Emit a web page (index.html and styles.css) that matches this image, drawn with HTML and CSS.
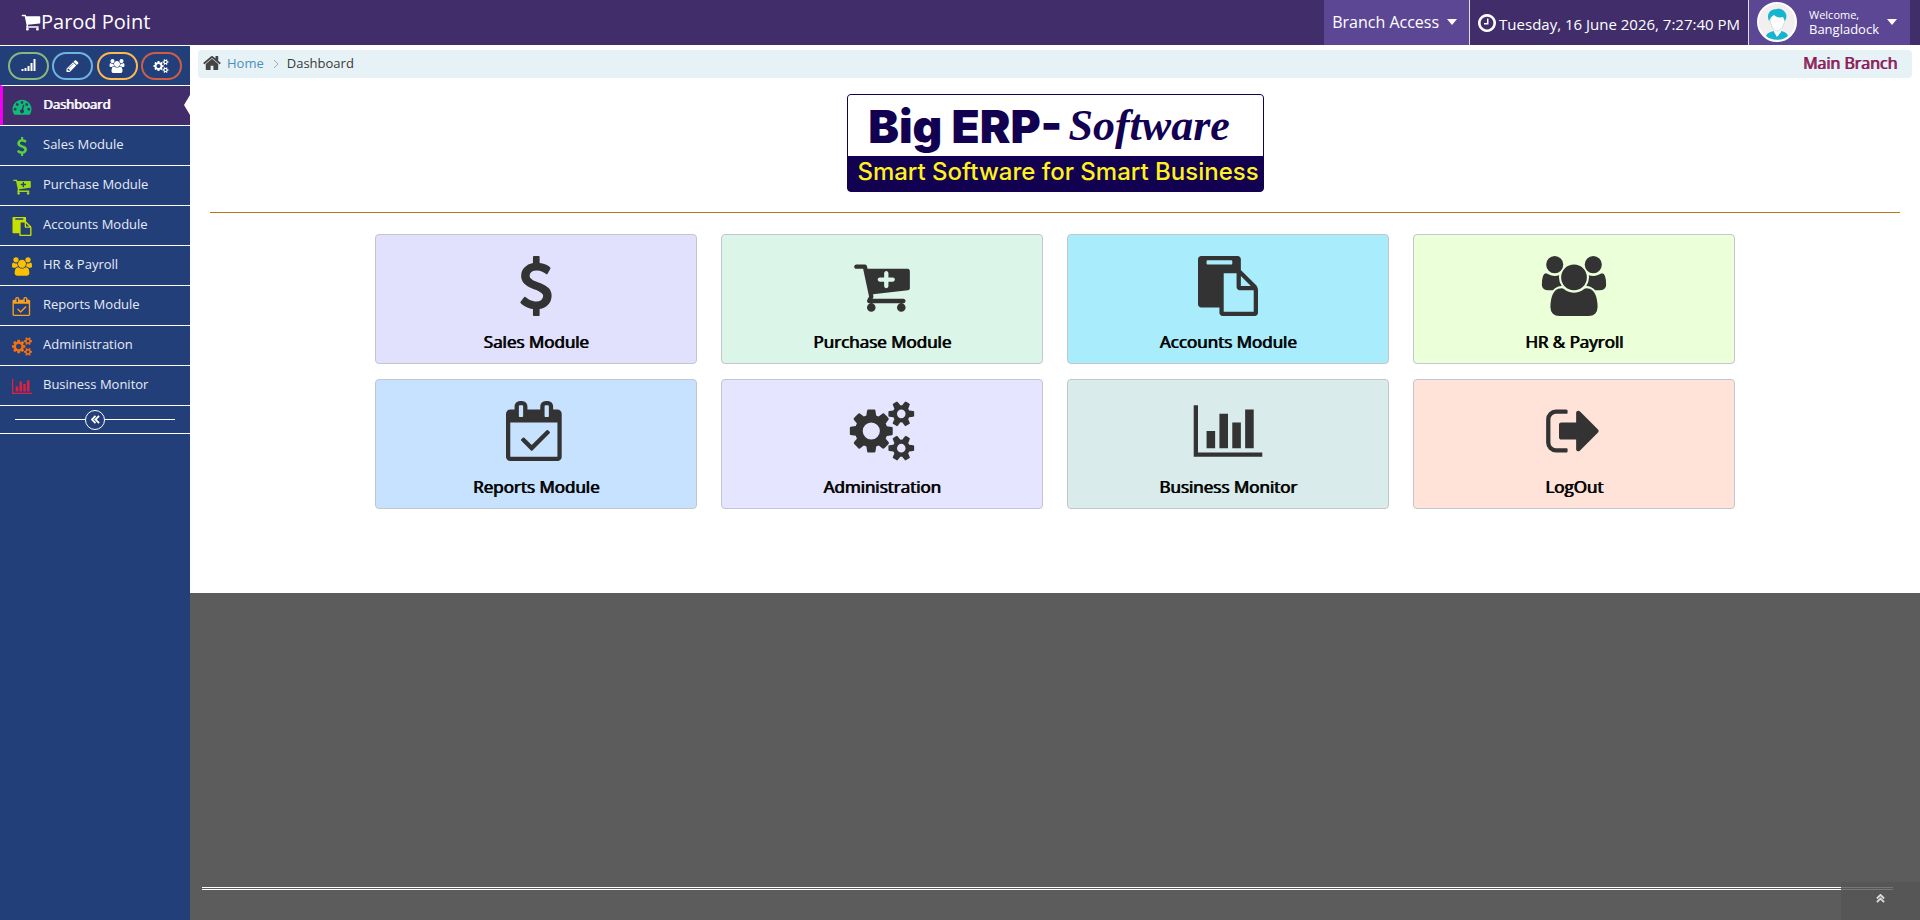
FILE: index.html
```html
<!DOCTYPE html>
<html lang="en">
<head>
    <meta charset="UTF-8">
    <meta name="viewport" content="width=device-width, initial-scale=1.0">
    <title>Dashboard</title>
    <link rel="stylesheet" href="styles.css">
</head>
<body>

    <!-- Icon set -->
    <svg class="icon-set" aria-hidden="true">
        <symbol id="icon-cart" viewBox="64 0 1664 1792"><path d="M704 1536q0 52-38 90t-90 38-90-38-38-90 38-90 90-38 90 38 38 90zm896 0q0 52-38 90t-90 38-90-38-38-90 38-90 90-38 90 38 38 90zm128-1088v512q0 24-16.5 42.5t-40.5 21.5l-1044 122q13 60 13 70 0 16-24 64h920q26 0 45 19t19 45-19 45-45 19h-1024q-26 0-45-19t-19-45q0-11 8-31.5t16-36 21.5-40 15.5-29.5l-177-823h-204q-26 0-45-19t-19-45 19-45 45-19h256q16 0 28.5 6.5t19.5 15.5 13 24.5 8 26 5.5 29.5 4.5 26h1201q26 0 45 19t19 45z"/></symbol>
        <symbol id="icon-cart-plus" viewBox="64 0 1664 1792"><path d="M1280 704q0-26-19-45t-45-19h-128v-128q0-26-19-45t-45-19-45 19-19 45v128h-128q-26 0-45 19t-19 45 19 45 45 19h128v128q0 26 19 45t45 19 45-19 19-45v-128h128q26 0 45-19t19-45zm-576 832q0 53-37.5 90.5t-90.5 37.5-90.5-37.5-37.5-90.5 37.5-90.5 90.5-37.5 90.5 37.5 37.5 90.5zm896 0q0 53-37.5 90.5t-90.5 37.5-90.5-37.5-37.5-90.5 37.5-90.5 90.5-37.5 90.5 37.5 37.5 90.5zm128-1088v512q0 24-16 42.5t-41 21.5l-1044 122q1 7 4.5 21.5t6 26.5 2.5 22q0 16-24 64h920q26 0 45 19t19 45-19 45-45 19h-1024q-26 0-45-19t-19-45q0-14 11-39.5t29.5-59.5 20.5-38l-177-823h-204q-26 0-45-19t-19-45 19-45 45-19h256q16 0 28.5 6.5t20 15.5 13 24.5 7.5 26.5 5.5 29.5 4.5 25.5h1201q26 0 45 19t19 45z"/></symbol>
        <symbol id="icon-dollar" viewBox="384 0 1024 1792"><path d="M1362 1185q0 153-99.5 263.5t-258.5 136.5v175q0 14-9 23t-23 9h-135q-13 0-22.5-9.5t-9.5-22.5v-175q-66-9-127.5-31t-101.5-44.5-74-48-46.5-37.5-17.5-18q-17-21-2-41l103-135q7-10 23-12 15-2 24 9l2 2q113 99 243 125 37 8 74 8 81 0 142.5-43t61.5-122q0-28-15-53t-33.5-42-58.5-37.5-66-32-80-32.5q-39-16-61.5-25t-61.5-26.5-62.5-31-56.5-35.5-53.5-42.5-43.5-49-35.5-58-21-66.5-8.5-78q0-138 98-242t255-134v-180q0-13 9.5-22.5t22.5-9.5h135q14 0 23 9t9 23v176q57 6 110.5 23t87 33.5 63.5 37.5 39 29 15 14q17 18 5 38l-81 146q-8 15-23 16-14 3-27-7-3-3-14.5-12t-39-26.5-58.5-32-74.5-26-85.5-11.5q-95 0-155 43t-60 111q0 26 8.5 48t29.5 41.5 39.5 33 56 31 60.5 27 70 27.5q53 20 81 31.5t76 35 75.5 42.5 62 50 53 63.5 31.5 76.5 13 94z"/></symbol>
        <symbol id="icon-paste" viewBox="0 0 1792 1792"><path d="M768 1664h896v-640h-416q-40 0-68-28t-28-68v-416h-384v1152zm256-1440v-64q0-13-9.5-22.5t-22.5-9.5h-704q-13 0-22.5 9.5t-9.5 22.5v64q0 13 9.5 22.5t22.5 9.5h704q13 0 22.5-9.5t9.5-22.5zm256 672h299l-299-299v299zm512 128v672q0 40-28 68t-68 28h-960q-40 0-68-28t-28-68v-160h-544q-40 0-68-28t-28-68v-1344q0-40 28-68t68-28h1088q40 0 68 28t28 68v328q21 13 36 28l408 408q28 28 48 76t20 88z"/></symbol>
        <symbol id="icon-users" viewBox="-64 0 1920 1792"><path d="M529 896q-162 5-265 128h-134q-82 0-138-40.5t-56-118.5q0-353 124-353 6 0 43.5 21t97.5 42.5 119 21.5q67 0 133-23-5 37-5 66 0 139 81 256zm1071 637q0 120-73 189.5t-194 69.5h-874q-121 0-194-69.5t-73-189.5q0-53 3.5-103.5t14-109 26.5-108.5 43-97.5 62-81 85.5-53.5 111.5-20q10 0 43 21.5t73 48 107 48 135 21.5 135-21.5 107-48 73-48 43-21.5q61 0 111.5 20t85.5 53.5 62 81 43 97.5 26.5 108.5 14 109 3.5 103.5zm-1024-1277q0 106-75 181t-181 75-181-75-75-181 75-181 181-75 181 75 75 181zm704 384q0 159-112.5 271.5t-271.5 112.5-271.5-112.5-112.5-271.5 112.5-271.5 271.5-112.5 271.5 112.5 112.5 271.5zm576 225q0 78-56 118.5t-138 40.5h-134q-103-123-265-128 81-117 81-256 0-29-5-66 66 23 133 23 59 0 119-21.5t97.5-42.5 43.5-21q124 0 124 353zm-128-609q0 106-75 181t-181 75-181-75-75-181 75-181 181-75 181 75 75 181z"/></symbol>
        <symbol id="icon-calendar" viewBox="0 0 1792 1792"><path d="M1303 964l-512 512q-10 9-23 9t-23-9l-288-288q-9-10-9-23t9-22l46-46q9-9 22-9t23 9l220 220 444-444q10-9 23-9t22 9l46 46q9 9 9 22t-9 23zm-1175 700h1408v-1024h-1408v1024zm384-1216v-288q0-14-9-23t-23-9h-64q-14 0-23 9t-9 23v288q0 14 9 23t23 9h64q14 0 23-9t9-23zm768 0v-288q0-14-9-23t-23-9h-64q-14 0-23 9t-9 23v288q0 14 9 23t23 9h64q14 0 23-9t9-23zm384-64v1280q0 52-38 90t-90 38h-1408q-52 0-90-38t-38-90v-1280q0-52 38-90t90-38h128v-96q0-66 47-113t113-47h64q66 0 113 47t47 113v96h384v-96q0-66 47-113t113-47h64q66 0 113 47t47 113v96h128q52 0 90 38t38 90z"/></symbol>
        <symbol id="icon-cogs" viewBox="-64 0 1920 1792"><path d="M832 896q0-106-75-181t-181-75-181 75-75 181 75 181 181 75 181-75 75-181zm768 512q0-52-38-90t-90-38-90 38-38 90q0 53 37.5 90.5t90.5 37.5 90.5-37.5 37.5-90.5zm0-1024q0-52-38-90t-90-38-90 38-38 90q0 53 37.5 90.5t90.5 37.5 90.5-37.5 37.5-90.5zm-384 421v185q0 10-7 19.5t-16 10.5l-155 24q-11 35-32 76 34 48 90 115 7 11 7 20 0 12-7 19-23 30-82.5 89.5t-78.5 59.5q-11 0-21-7l-115-90q-37 19-77 31-11 108-23 155-7 24-30 24h-186q-11 0-20-7.5t-10-17.5l-23-153q-34-10-75-31l-118 89q-7 7-20 7-11 0-21-8-144-133-144-160 0-9 7-19 10-14 41-53t47-61q-23-44-35-82l-152-24q-10-1-17-9.5t-7-19.5v-185q0-10 7-19.5t16-10.5l155-24q11-35 32-76-34-48-90-115-7-11-7-20 0-12 7-20 22-30 82-89t79-59q11 0 21 7l115 90q34-18 77-32 11-108 23-154 7-24 30-24h186q11 0 20 7.5t10 17.5l23 153q34 10 75 31l118-89q8-7 20-7 11 0 21 8 144 133 144 160 0 8-7 19-12 16-42 54t-45 60q23 48 34 82l152 23q10 2 17 10.5t7 19.5zm640 533v140q0 16-149 31-12 27-30 52 51 113 51 138 0 4-4 7-122 71-124 71-8 0-46-47t-52-68q-20 2-30 2t-30-2q-14 21-52 68t-46 47q-2 0-124-71-4-3-4-7 0-25 51-138-18-25-30-52-149-15-149-31v-140q0-16 149-31 13-29 30-52-51-113-51-138 0-4 4-7 4-2 35-20t59-34 30-16q8 0 46 46.5t52 67.5q20-2 30-2t30 2q51-71 92-112l6-2q4 0 124 70 4 3 4 7 0 25-51 138 17 23 30 52 149 15 149 31zm0-1024v140q0 16-149 31-12 27-30 52 51 113 51 138 0 4-4 7-122 71-124 71-8 0-46-47t-52-68q-20 2-30 2t-30-2q-14 21-52 68t-46 47q-2 0-124-71-4-3-4-7 0-25 51-138-18-25-30-52-149-15-149-31v-140q0-16 149-31 13-29 30-52-51-113-51-138 0-4 4-7 4-2 35-20t59-34 30-16q8 0 46 46.5t52 67.5q20-2 30-2t30 2q51-71 92-112l6-2q4 0 124 70 4 3 4 7 0 25-51 138 17 23 30 52 149 15 149 31z"/></symbol>
        <symbol id="icon-chart" viewBox="0 0 2048 1792"><path d="M640 896v512h-256v-512h256zm384-512v1024h-256v-1024h256zm1024 1152v128h-2048v-1536h128v1408h1920zm-640-896v768h-256v-768h256zm384-384v1152h-256v-1152h256z"/></symbol>
        <symbol id="icon-signout" viewBox="64 0 1664 1792"><path d="M704 1440q0 4 1 20t.5 26.5-3 23.5-10 19.5-20.5 6.5h-320q-119 0-203.5-84.5t-84.5-203.5v-704q0-119 84.5-203.5t203.5-84.5h320q13 0 22.5 9.5t9.5 22.5q0 4 1 20t.5 26.5-3 23.5-10 19.5-20.5 6.5h-320q-66 0-113 47t-47 113v704q0 66 47 113t113 47h312l11.5 1 11.5 3 8 5.5 7 9 2 13.5zm928-544q0 26-19 45l-544 544q-19 19-45 19t-45-19-19-45v-288h-448q-26 0-45-19t-19-45v-384q0-26 19-45t45-19h448v-288q0-26 19-45t45-19 45 19l544 544q19 19 19 45z"/></symbol>
        <symbol id="icon-gauge" viewBox="0 0 1792 1792"><path d="M384 1152q0-53-37.5-90.5t-90.5-37.5-90.5 37.5-37.5 90.5 37.5 90.5 90.5 37.5 90.5-37.5 37.5-90.5zm192-448q0-53-37.5-90.5t-90.5-37.5-90.5 37.5-37.5 90.5 37.5 90.5 90.5 37.5 90.5-37.5 37.5-90.5zm428 481l101-382q6-26-7.5-48.5t-38.5-29.5-48 6.5-30 39.5l-101 382q-60 5-107 43.5t-63 98.5q-20 77 20 146t117 89 146-20 89-117q16-60-6-117t-72-91zm660-33q0-53-37.5-90.5t-90.5-37.5-90.5 37.5-37.5 90.5 37.5 90.5 90.5 37.5 90.5-37.5 37.5-90.5zm-640-640q0-53-37.5-90.5t-90.5-37.5-90.5 37.5-37.5 90.5 37.5 90.5 90.5 37.5 90.5-37.5 37.5-90.5zm448 192q0-53-37.5-90.5t-90.5-37.5-90.5 37.5-37.5 90.5 37.5 90.5 90.5 37.5 90.5-37.5 37.5-90.5zm320 448q0 261-141 483-19 29-54 29h-1402q-35 0-54-29-141-221-141-483 0-182 71-348t191-286 286-191 348-71 348 71 286 191 191 286 71 348z"/></symbol>
        <symbol id="icon-signal" viewBox="0 0 1792 1792"><path d="M0 1280h256v256H0zM384 1152h256v384H384zM768 896h256v640H768zM1152 512h256v1024h-256zM1536 0h256v1536h-256z"/></symbol>
        <symbol id="icon-pencil" viewBox="64 0 1664 1792"><path d="M491 1536l91-91-235-235-91 91v107h128v128h107zm523-928q0-22-22-22-10 0-17 7l-542 542q-7 7-7 17 0 22 22 22 10 0 17-7l542-542q7-7 7-17zm-54-192l416 416-832 832h-416v-416zm683 96q0 53-37 90l-166 166-416-416 166-165q36-38 90-38 53 0 91 38l235 234q37 39 37 91z"/></symbol>
        <symbol id="icon-clock" viewBox="128 128 1536 1536"><path d="M1024 544v448q0 14-9 23t-23 9h-320q-14 0-23-9t-9-23v-64q0-14 9-23t23-9h224v-352q0-14 9-23t23-9h64q14 0 23 9t9 23zm416 352q0-148-73-273t-198-198-273-73-273 73-198 198-73 273 73 273 198 198 273 73 273-73 198-198 73-273zm224 0q0 209-103 385.5t-279.5 279.5-385.5 103-385.5-103-279.5-279.5-103-385.5 103-385.5 279.5-279.5 385.5-103 385.5 103 279.5 279.5 103 385.5z"/></symbol>
        <symbol id="icon-home" viewBox="64 192 1664 1408"><path d="M1472 992v480q0 26-19 45t-45 19h-384v-384h-256v384h-384q-26 0-45-19t-19-45v-480q0-1 .5-3t.5-3l575-474 575 474q1 2 1 6zm223-69l-62 74q-8 9-21 11h-3q-13 0-21-7l-692-577-692 577q-12 8-24 7-13-2-21-11l-62-74q-8-10-7-23.5t11-21.5l719-599q32-26 76-26t76 26l244 204v-195q0-14 9-23t23-9h192q14 0 23 9t9 23v408l219 182q10 8 11 21.5t-7 23.5z"/></symbol>
    </svg>

    <!-- Top bar -->
    <header class="navbar">
        <a href="#" class="brand"><svg class="brand-icon"><use href="#icon-cart"/></svg>Parod Point</a>
        <div class="nav-right">
            <button type="button" class="nav-item branch-access">Branch Access <span class="caret"></span></button>
            <div class="nav-item clock"><svg class="clock-icon"><use href="#icon-clock"/></svg>Tuesday, 16 June 2026, 7:27:40 PM</div>
            <button type="button" class="nav-item user-menu">
                <svg class="avatar" viewBox="0 0 40 40" aria-hidden="true">
                    <circle cx="20" cy="20" r="19" fill="#f1eff0" stroke="#fff" stroke-width="2"/>
                    <path d="M9 34c1-3 4-4 8-5l3 5 4-5c4 1 6 2 7 5-6 5-16 5-22 0z" fill="#15b5cf"/>
                    <path d="M17 26v4l3 5 4-5v-4z" fill="#fff"/>
                    <path d="M13 15c0 8 3 14 7 14s8-6 8-14l-3-4H15z" fill="#fff" stroke="#d5dde0" stroke-width="1"/>
                    <path d="M12 19c-3-7 1-12 8-12 4-1 8 2 9 5 1 2 0 5-1 7l-2-4c-4 1-7 0-9-2-2 1-4 3-5 6z" fill="#15b5cf"/>
                </svg>
                <span class="user-info"><small>Welcome,</small>Bangladock</span>
                <span class="caret"></span>
            </button>
        </div>
    </header>

    <div class="container">
        <!-- Sidebar -->
        <aside class="sidebar">
            <div class="shortcuts">
                <button type="button" class="shortcut green" aria-label="Statistics"><svg class="shortcut-icon"><use href="#icon-signal"/></svg></button>
                <button type="button" class="shortcut blue" aria-label="Edit"><svg class="shortcut-icon"><use href="#icon-pencil"/></svg></button>
                <button type="button" class="shortcut orange" aria-label="Users"><svg class="shortcut-icon wide"><use href="#icon-users"/></svg></button>
                <button type="button" class="shortcut red" aria-label="Settings"><svg class="shortcut-icon wide"><use href="#icon-cogs"/></svg></button>
            </div>
            <nav class="menu">
                <a href="#" class="menu-item active"><svg class="menu-icon c1"><use href="#icon-gauge"/></svg>Dashboard</a>
                <a href="#" class="menu-item"><svg class="menu-icon c2"><use href="#icon-dollar"/></svg>Sales Module</a>
                <a href="#" class="menu-item"><svg class="menu-icon c3"><use href="#icon-cart-plus"/></svg>Purchase Module</a>
                <a href="#" class="menu-item"><svg class="menu-icon c4"><use href="#icon-paste"/></svg>Accounts Module</a>
                <a href="#" class="menu-item"><svg class="menu-icon c5"><use href="#icon-users"/></svg>HR &amp; Payroll</a>
                <a href="#" class="menu-item"><svg class="menu-icon c6"><use href="#icon-calendar"/></svg>Reports Module</a>
                <a href="#" class="menu-item"><svg class="menu-icon c7"><use href="#icon-cogs"/></svg>Administration</a>
                <a href="#" class="menu-item"><svg class="menu-icon c8"><use href="#icon-chart"/></svg>Business Monitor</a>
            </nav>
            <div class="sidebar-toggle">
                <button type="button" class="toggle-btn" aria-label="Collapse menu">
                    <svg class="toggle-icon" viewBox="0 0 10 10"><path d="M5 1L1 5l4 4M9 1L5 5l4 4"/></svg>
                </button>
            </div>
        </aside>

        <!-- Main area -->
        <div class="main">
            <main class="content">
                <div class="breadcrumb">
                    <svg class="home-icon"><use href="#icon-home"/></svg>
                    <a href="#">Home</a>
                    <svg class="separator" viewBox="0 0 6 10"><path d="M1 1l4 4-4 4"/></svg>
                    <span>Dashboard</span>
                    <strong class="branch-name">Main Branch</strong>
                </div>

                <div class="page">
                    <div class="logo">
                        <div class="logo-top"><span class="logo-erp">Big ERP-</span><span class="logo-soft">Software</span></div>
                        <div class="logo-tagline">Smart Software for Smart Business</div>
                    </div>
                    <hr class="divider">

                    <div class="modules">
                        <a href="#" class="module sales"><svg class="module-icon"><use href="#icon-dollar"/></svg>Sales Module</a>
                        <a href="#" class="module purchase"><svg class="module-icon"><use href="#icon-cart-plus"/></svg>Purchase Module</a>
                        <a href="#" class="module accounts"><svg class="module-icon"><use href="#icon-paste"/></svg>Accounts Module</a>
                        <a href="#" class="module hr"><svg class="module-icon"><use href="#icon-users"/></svg>HR &amp; Payroll</a>
                        <a href="#" class="module reports"><svg class="module-icon"><use href="#icon-calendar"/></svg>Reports Module</a>
                        <a href="#" class="module admin"><svg class="module-icon"><use href="#icon-cogs"/></svg>Administration</a>
                        <a href="#" class="module monitor"><svg class="module-icon"><use href="#icon-chart"/></svg>Business Monitor</a>
                        <a href="#" class="module logout"><svg class="module-icon"><use href="#icon-signout"/></svg>LogOut</a>
                    </div>
                </div>
            </main>
            <footer class="footer"></footer>
        </div>
    </div>

    <button type="button" class="scroll-up" aria-label="Back to top">
        <svg class="scroll-icon" viewBox="0 0 10 10"><path d="M1 5l4-4 4 4M1 9l4-4 4 4"/></svg>
    </button>

</body>
</html>
```

FILE: styles.css
```css
* {
    box-sizing: border-box;
}
body {
    display: flex;
    flex-direction: column;
    min-height: 100vh;
    margin: 0;
    font-family: "Open Sans", sans-serif;
    font-size: 13px;
    color: #393939;
    background-color: #5c5c5c;
}
a {
    text-decoration: none;
}
button {
    font-family: inherit;
    cursor: pointer;
}
svg {
    fill: currentColor;
    flex-shrink: 0;
}
.icon-set {
    display: none;
}

/* Top bar */
.navbar {
    display: flex;
    justify-content: space-between;
    height: 45px;
    padding: 0 10px 0 21px;
    background-color: #402d69;
    color: white;
}
.brand {
    display: flex;
    align-items: center;
    padding-bottom: 2px;
    font-size: 20px;
    color: white;
}
.brand-icon {
    width: 20px;
    height: 20px;
}
.nav-right {
    display: flex;
}
.nav-item {
    display: flex;
    align-items: center;
    border: none;
    border-left: 1px solid #ddd;
    color: white;
    font-size: 16px;
}
.branch-access {
    gap: 8px;
    padding: 0 12px 2px 8px;
    border-left: none;
    background-color: #5c4795;
}
.clock {
    gap: 3px;
    padding: 3px 8px 0;
    font-size: 15px;
}
.clock-icon {
    width: 18px;
    height: 18px;
    margin-bottom: 2px;
}
.user-menu {
    padding: 0 13px 2px 8px;
    background-color: #5c4795;
}
.avatar {
    width: 40px;
    height: 40px;
    margin-right: 12px;
}
.user-info {
    margin-right: 8px;
    font-size: 13px;
    line-height: 14px;
    text-align: left;
}
.user-info small {
    display: block;
    font-size: 11px;
}
.caret {
    border: 5px solid transparent;
    border-top: 6px solid white;
    border-bottom: none;
}

.container {
    display: flex;
    flex: 1;
}

/* Sidebar */
.sidebar {
    width: 190px;
    flex-shrink: 0;
    background-color: #233f7a;
    border-top: 1px solid white;
}
.shortcuts {
    display: flex;
    justify-content: space-between;
    padding: 6px 8px 5px;
}
.shortcut {
    display: flex;
    align-items: center;
    justify-content: center;
    width: 41px;
    height: 28px;
    padding: 0;
    border: 2px solid;
    border-radius: 14px;
    background: none;
}
.shortcut-icon {
    width: 15px;
    height: 14px;
    color: white;
}
.shortcut-icon.wide {
    width: 16px;
}
.green {
    border-color: #87b87f;
}
.blue {
    border-color: #6fb3e0;
}
.orange {
    border-color: #ffb752;
}
.red {
    border-color: #d15b47;
}
.menu-item {
    display: flex;
    align-items: center;
    position: relative;
    height: 40px;
    padding: 0 0 4px 12px;
    border-top: 1px solid white;
    color: #e6ecf5;
}
.menu-item.active {
    padding-left: 9px;
    border-left: 3px solid #f000f0;
    background-color: #402d69;
    color: white;
    text-shadow: 1px 0 currentColor;
}
.menu-item.active::after {
    content: "";
    position: absolute;
    top: 9px;
    right: 0;
    border: 10px solid transparent;
    border-right: 6px solid white;
    border-left: none;
}
.menu-icon {
    width: 20px;
    height: 19px;
    margin: 5px 11px 0 0;
}
.c1 { color: #0cbc77; }
.c2 { color: #5bcf3c; }
.c3 { color: #a2d911; }
.c4 { color: #c8e000; }
.c5 { color: #fcc000; }
.c6 { color: #fb9f1c; }
.c7 { color: #f27011; }
.c8 { color: #e51e3f; }
.sidebar-toggle {
    display: flex;
    align-items: center;
    height: 29px;
    padding: 0 15px;
    border-top: 1px solid white;
    border-bottom: 1px solid white;
}
.sidebar-toggle::before,
.sidebar-toggle::after {
    content: "";
    flex: 1;
    height: 1px;
    background-color: white;
}
.toggle-btn {
    display: flex;
    align-items: center;
    justify-content: center;
    width: 20px;
    height: 20px;
    padding: 0;
    border: 1px solid white;
    border-radius: 50%;
    background: none;
    color: white;
}
.toggle-icon {
    width: 9px;
    height: 9px;
}
.toggle-icon path,
.separator path,
.scroll-icon path {
    fill: none;
    stroke: currentColor;
    stroke-width: 2;
}

/* Main area */
.main {
    display: flex;
    flex: 1;
    flex-direction: column;
    justify-content: space-between;
}
.content {
    padding: 5px 8px 84px;
    background-color: white;
}
.breadcrumb {
    display: flex;
    align-items: center;
    height: 28px;
    padding: 0 15px 2px 5px;
    border-radius: 4px;
    background-color: #e7f2f6;
}
.home-icon {
    width: 18px;
    height: 16px;
    margin-right: 6px;
    color: #444;
}
.breadcrumb a {
    color: #4c8fbd;
}
.separator {
    width: 6px;
    height: 10px;
    margin: 2px 8px 0 9px;
    color: #a2a6af;
}
.separator path {
    stroke-width: 1;
}
.branch-name {
    margin-left: auto;
    font-size: 16px;
    font-weight: normal;
    color: #8b1a5a;
    text-shadow: 1px 0 currentColor;
}
.page {
    padding: 16px 12px 0;
}

/* Product logo */
.logo {
    width: 417px;
    margin: 0 auto;
    border: 1px solid #120050;
    border-radius: 4px;
    background-color: #120050;
    white-space: nowrap;
    overflow: hidden;
}
.logo-top {
    display: flex;
    align-items: center;
    justify-content: center;
    gap: 6px;
    height: 61px;
    padding-right: 12px;
    background-color: white;
    color: #120050;
}
.logo-erp {
    font-family: Inter, sans-serif;
    font-size: 46px;
    font-weight: 900;
}
.logo-soft {
    font-family: "Liberation Serif", serif;
    font-size: 44px;
    font-style: italic;
    font-weight: bold;
}
.logo-tagline {
    height: 35px;
    padding-left: 6px;
    color: #fff31a;
    font-family: Inter, sans-serif;
    font-size: 24px;
    font-weight: 500;
    line-height: 32px;
    text-align: center;
}
.divider {
    height: 1px;
    margin: 20px 0 21px;
    border: none;
    background-color: #b9761e;
}

/* Module cards */
.modules {
    display: grid;
    grid-template-columns: repeat(4, 1fr);
    gap: 15px 24px;
    padding: 0 165px;
}
.module {
    display: flex;
    flex-direction: column;
    align-items: center;
    height: 130px;
    padding-top: 21px;
    border: 1px solid #c5c5cf;
    border-radius: 4px;
    color: black;
    font-size: 17px;
    line-height: 24px;
    text-shadow: 1px 0 currentColor;
}
.module-icon {
    width: 70px;
    height: 60px;
    margin-bottom: 14px;
    color: #333;
}
.sales { background-color: #e1e0fd; }
.purchase { background-color: #dcf5e9; }
.accounts { background-color: #a9edfd; }
.hr { background-color: #ebffd9; }
.reports { background-color: #c7e2ff; }
.admin { background-color: #e6e5ff; }
.monitor { background-color: #d9ebea; }
.logout { background-color: #ffe3d8; }

/* Footer */
.footer {
    height: 33px;
    margin: 0 27px 0 12px;
    border-top: 3px double white;
}
.scroll-up {
    display: flex;
    align-items: flex-start;
    justify-content: center;
    position: fixed;
    right: 0;
    bottom: 0;
    width: 79px;
    height: 38px;
    padding: 12px 0 0;
    border: none;
    background-color: rgba(85, 85, 85, 0.8);
    color: #ddd;
}
.scroll-icon {
    width: 9px;
    height: 9px;
}
```
